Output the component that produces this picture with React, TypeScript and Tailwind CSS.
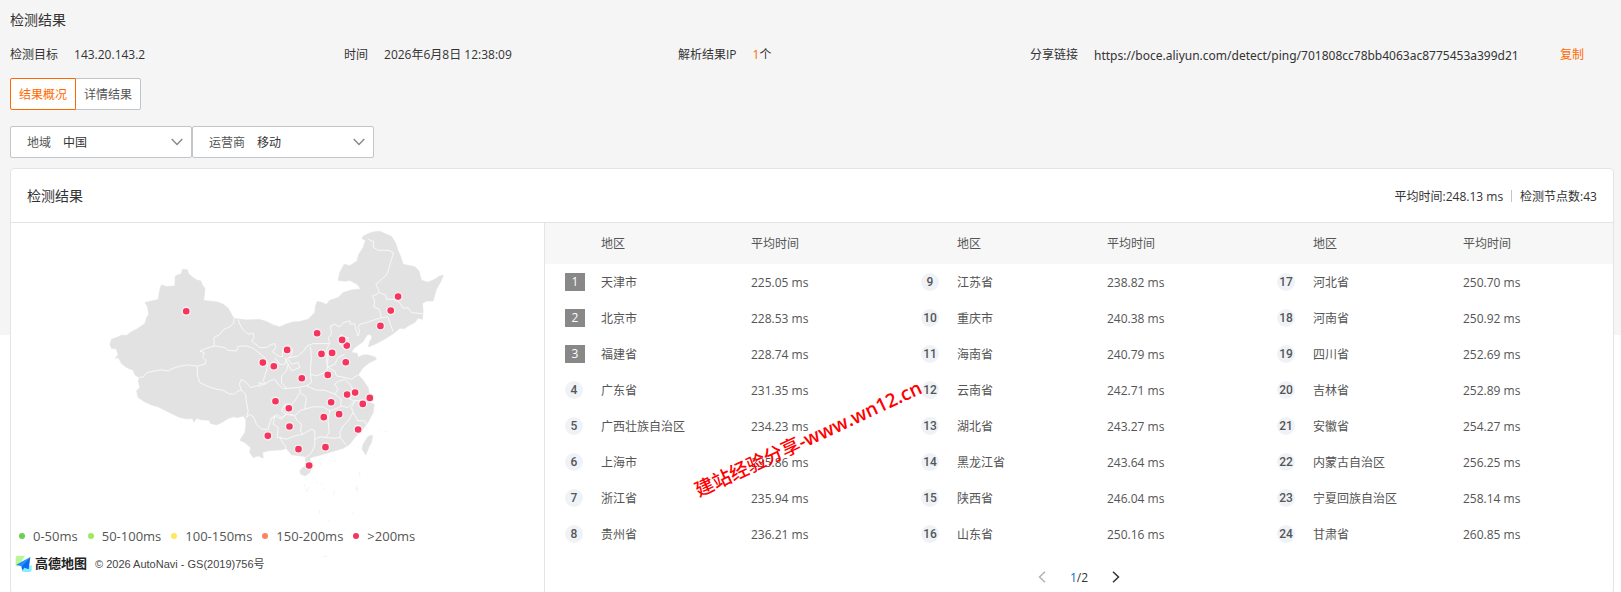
import { useState } from 'react'
import clsx from 'clsx'

interface RegionTime {
  name: string
  time: string
}

const REGIONS: RegionTime[] = [
  { name: '天津市', time: '225.05' },
  { name: '北京市', time: '228.53' },
  { name: '福建省', time: '228.74' },
  { name: '广东省', time: '231.35' },
  { name: '广西壮族自治区', time: '234.23' },
  { name: '上海市', time: '235.86' },
  { name: '浙江省', time: '235.94' },
  { name: '贵州省', time: '236.21' },
  { name: '江苏省', time: '238.82' },
  { name: '重庆市', time: '240.38' },
  { name: '海南省', time: '240.79' },
  { name: '云南省', time: '242.71' },
  { name: '湖北省', time: '243.27' },
  { name: '黑龙江省', time: '243.64' },
  { name: '陕西省', time: '246.04' },
  { name: '山东省', time: '250.16' },
  { name: '河北省', time: '250.70' },
  { name: '河南省', time: '250.92' },
  { name: '四川省', time: '252.69' },
  { name: '吉林省', time: '252.89' },
  { name: '安徽省', time: '254.27' },
  { name: '内蒙古自治区', time: '256.25' },
  { name: '宁夏回族自治区', time: '258.14' },
  { name: '甘肃省', time: '260.85' },
]

const ROWS_PER_COLUMN = 8

const LEGEND = [
  { label: '0-50ms', color: 'bg-[#6bd04f]' },
  { label: '50-100ms', color: 'bg-[#a0e95c]' },
  { label: '100-150ms', color: 'bg-[#ffe75c]' },
  { label: '150-200ms', color: 'bg-[#fa8558]' },
  { label: '>200ms', color: 'bg-[#f7345e]' },
]

// Probe nodes in map units (3 units per pixel at the default panel width)
const NODES = [
  [259, 271], [489, 425], [522, 436], [527, 541], [567, 562], [569, 617],
  [504, 645], [596, 685], [562, 387], [895, 227], [873, 269], [842, 315],
  [652, 337], [741, 374], [727, 357], [665, 399], [697, 396], [738, 424],
  [684, 462], [606, 472], [742, 521], [766, 515], [810, 531], [789, 549],
  [694, 544], [718, 580], [672, 589], [775, 626], [677, 679], [628, 734],
]

const MAINLAND =
  'M30 370 35 355 50 350 65 343 82 343 90 335 110 325 135 308 140 290 147 280 142 255 135 245 155 240 175 236 178 215 184 192 200 197 225 195 226 165 244 158 248 145 262 146 266 158 280 170 290 177 303 180 306 190 315 203 314 220 311 238 325 240 352 243 370 250 385 262 395 280 402 293 440 297 480 296 500 302 520 312 540 318 560 309 580 303 600 302 625 295 645 275 647 255 652 242 665 244 680 251 690 238 715 230 730 215 755 207 783 204 772 190 750 178 735 181 715 178 720 155 733 130 750 134 772 120 777 100 790 80 797 58 787 53 790 46 805 38 820 33 840 31 860 40 875 46 887 65 895 90 902 105 910 130 930 134 945 137 958 150 965 178 985 184 1005 175 1020 165 1031 163 1023 182 1010 205 1000 240 980 240 968 248 970 270 968 295 955 292 945 305 925 315 915 323 900 322 885 335 865 348 845 360 825 370 806 378 810 362 817 350 812 340 802 342 790 362 772 375 760 385 755 395 772 397 775 409 790 402 805 402 825 408 830 415 810 425 790 440 780 455 775 462 788 475 798 490 805 500 808 517 820 532 810 545 823 550 820 575 807 600 795 618 780 635 765 650 750 670 730 682 705 690 680 697 660 703 640 708 630 712 633 725 620 726 616 718 620 708 600 705 575 702 565 690 560 682 545 687 525 688 505 690 488 695 490 712 475 705 460 710 450 695 452 680 435 665 420 658 435 635 438 615 438 595 430 585 415 590 400 588 385 593 365 605 350 612 332 608 328 598 305 597 290 592 282 604 278 593 262 594 240 590 215 578 195 568 175 558 155 552 135 543 115 530 110 510 120 500 115 480 118 470 105 462 100 448 80 440 65 428 55 410 46 413 55 400 48 383 35 383Z'

const ISLANDS = [
  'M817 643 805 647 790 670 787 685 798 702 807 680 815 665 818 648Z',
  'M635 738 630 755 617 765 603 760 600 750 608 741 618 736Z',
]

const WEST_BORDERS = [
  'M118 470 130 468 140 455 165 450 185 447 205 450 220 442 240 436 265 432 292 436',
  'M292 436 315 430 318 418 308 408 313 395 300 390 320 382 343 375 342 350 360 340 372 325 390 318 402 305 402 293',
  'M292 436 293 465 300 485 320 495 350 505 370 508 385 518 402 520 415 510 425 508',
  'M343 375 375 380 385 388 410 390 415 376 440 375 460 382 480 398 495 410 505 425 500 450 495 465 490 480 497 488 480 495',
  'M415 296 420 310 428 325 445 340 460 337 463 350 455 360 480 380 500 380 515 370 525 368 528 380 518 393 535 405 550 408',
  'M548 408 548 385 565 372 578 385 575 405 560 415 555 430 540 430 525 410',
  'M425 508 418 490 425 475 440 485 452 500 470 495 480 495 478 485 495 490 510 480 525 475 535 490 550 503',
  'M425 508 437 520 440 545 445 570 440 590 450 580 462 590 470 610 485 625 505 625 510 605 515 595 530 580 545 590 560 580 580 582',
]

const NORTH_BORDERS = [
  'M265 55 282 62 280 78 295 88 325 88 342 95 335 115 328 140 322 160 300 180 288 190 298 210 292 220 278 225',
  'M298 215 318 222 320 235 340 235 360 245 370 262 385 260 395 275 428 278',
  'M278 225 285 240 282 258 298 265 305 290 280 298 260 305 240 310 235 320 240 330 235 345 228 325 225 308 212 310 210 300 190 305 180 318 165 310 152 315 155 340 145 350 150 368',
  'M305 290 325 288 330 305 340 332',
  'M185 340 190 350 205 350 205 365 195 380 180 370 178 350 185 340',
  'M150 368 140 385 145 410 142 440',
]

const SOUTH_BORDERS = [
  'M195 110 205 130 200 150 185 165 185 185 200 203',
  'M205 115 215 130 235 125 240 140 215 150 205 130',
  'M205 110 215 110 235 105 250 92 262 75 280 68 298 68 328 68',
  'M272 78 275 110 272 140 272 160 275 185 260 195 235 200 190 203',
  'M272 160 290 165 315 155 325 140 320 120 322 95',
  'M322 140 345 130 355 110 375 100',
  'M325 140 345 150 350 165 375 170 395 175 415 162',
  'M360 180 375 175 395 195 400 215 390 235 405 240 425 238 445 240',
  'M260 195 290 208 315 208 345 220 355 205 345 190 360 178',
  'M345 220 365 235 362 255 385 260 395 250 405 240 395 260 400 275 415 300 435 300 440 312',
  'M240 203 242 215 260 230 255 265 280 258 310 258 330 270 362 258',
  'M240 215 225 240 215 250 195 250 185 270 200 280 225 285 240 270 255 265',
  'M225 285 232 300 245 310 242 330 250 340 225 345 200 355 180 350',
  'M150 295 165 285 185 295 200 280',
  'M165 285 160 310 175 320 172 350 180 350 195 375 200 382',
  'M250 340 275 325 285 330 285 375 275 395 262 408',
  'M330 270 325 300 328 335 318 350 345 352 362 350',
  'M285 355 300 348 318 350',
  'M400 275 385 300 370 315 360 335 362 350 378 372',
]

// Reefs and outlying islands of the south
const REEFS =
  'M663 725v8M702 718l8 3M778 752l3 14M612 790l4 8M626 800l-4 12M662 790l6 3M772 800v12M835 635l5-4M855 632h5M614 803l6 7M650 784h5M674 802l-5 4M658 868l2 10M770 795v14M704 810l-3 12M762 874l-5 8M689 898l-4 6M738 920l-7 5M718 930l-5 3M670 1008l12-2'

function ChinaMap() {
  return (
    <svg
      viewBox="-267 6 1600 903"
      role="img"
      aria-label="检测节点分布"
      className="block w-full overflow-visible"
    >
      <g fill="#e2e2e2" stroke="#e2e2e2" strokeWidth="2" strokeLinejoin="round">
        <path d={MAINLAND} />
        {ISLANDS.map((d) => (
          <path key={d} d={d} />
        ))}
      </g>
      <path d={REEFS} fill="none" stroke="#ededed" strokeWidth="2" />
      <g fill="none" stroke="#f8f8f8" strokeWidth="3" strokeLinejoin="round">
        {WEST_BORDERS.map((d) => (
          <path key={d} d={d} />
        ))}
        <g transform="translate(540 0)">
          {NORTH_BORDERS.map((d) => (
            <path key={d} d={d} />
          ))}
        </g>
        <g transform="translate(360 300)">
          {SOUTH_BORDERS.map((d) => (
            <path key={d} d={d} />
          ))}
        </g>
      </g>
      {NODES.map(([x, y]) => (
        <circle key={`${x}-${y}`} cx={x} cy={y} r="12" fill="#f7345e" stroke="#f4f4f4" strokeWidth="4" />
      ))}
    </svg>
  )
}

function AmapLogo() {
  return (
    <svg viewBox="0 0 54 54" className="size-[18px]" aria-hidden="true">
      <path d="M8 2h22L12 34H2V8a6 6 0 0 1 6-6Z" fill="#b9f59a" />
      <path d="M26 38 50 30v14a7 7 0 0 1-7 7H22Z" fill="#8cecff" />
      <path d="M46 6 4 29l15 5Z" fill="#1b8dff" />
      <path d="M46 6 19 34l3 13 6-9 13 5Z" fill="#0a6cf0" />
    </svg>
  )
}

interface FilterSelectProps {
  id: string
  label: string
  options: string[]
}

function FilterSelect({ id, label, options }: FilterSelectProps) {
  return (
    <div className="relative flex h-8 w-[182px] items-center rounded-xs border border-[#c0c6cc] bg-white pt-0.5 pl-4">
      <label htmlFor={id} className="text-[#555]">
        {label}
      </label>
      <select id={id} className="h-full flex-1 appearance-none bg-transparent pl-3 text-[#333] outline-none">
        {options.map((option) => (
          <option key={option}>{option}</option>
        ))}
      </select>
      <svg
        viewBox="0 0 12 8"
        className="pointer-events-none absolute top-[11px] right-2 h-2 w-3"
        fill="none"
        stroke="#888"
        strokeWidth="1.4"
      >
        <path d="m.7 1 5.3 5.4L11.3 1" />
      </svg>
    </div>
  )
}

function RankBadge({ rank }: { rank: number }) {
  return (
    <span
      className={clsx(
        'flex h-[18px] items-center justify-center',
        rank <= 3
          ? 'w-5 bg-[#888] text-white'
          : "w-[18px] rounded-full bg-[#eff3f8] font-['Roboto'] font-medium text-[#555]",
      )}
    >
      {rank}
    </span>
  )
}

function RankTable({ start }: { start: number }) {
  const rows = REGIONS.slice(start, start + ROWS_PER_COLUMN)
  return (
    <table className="w-full table-fixed text-left text-[#555]">
      <thead>
        <tr className="h-[41px] bg-[#f7f7f7]">
          <th className="w-14" />
          <th className="w-[150px] font-normal">地区</th>
          <th className="font-normal">平均时间</th>
        </tr>
      </thead>
      <tbody>
        {rows.map((row, i) => (
          <tr key={row.name} className="h-9">
            <td className="pl-5">
              <RankBadge rank={start + i + 1} />
            </td>
            <td className="pt-0.5">{row.name}</td>
            <td className="pt-0.5">{row.time} ms</td>
          </tr>
        ))}
      </tbody>
    </table>
  )
}

const TABS = ['结果概况', '详情结果']

export default function App() {
  const [tab, setTab] = useState(TABS[0])

  return (
    <main className="bg-[linear-gradient(#f5f5f5,#f5f5f5)] bg-[length:100%_335px] bg-no-repeat pt-2.5 pr-[7px] pl-2.5 font-['Open_Sans','Noto_Sans_CJK_SC',sans-serif] text-xs leading-5 text-[#333]">
      <h1 className="text-sm leading-5">检测结果</h1>

      <div className="mt-[15px] flex h-5">
        <div className="flex w-[334px] gap-4">
          <span>检测目标</span>
          <span>143.20.143.2</span>
        </div>
        <div className="flex w-[334px] gap-4">
          <span>时间</span>
          <span>2026年6月8日 12:38:09</span>
        </div>
        <div className="flex gap-4">
          <span>解析结果IP</span>
          <span>
            <span className="text-[#ff6a00]">1</span>个
          </span>
        </div>
        <div className="ml-auto flex pr-[30px]">
          <label htmlFor="share-link">分享链接</label>
          <input
            id="share-link"
            readOnly
            value="https://boce.aliyun.com/detect/ping/701808cc78bb4063ac8775453a399d21"
            className="mt-1 ml-4 h-[14px] w-[450px] bg-transparent font-['Noto_Sans',sans-serif] leading-[14px] outline-none"
          />
          <button type="button" className="ml-4 text-[#ff6a00]">
            复制
          </button>
        </div>
      </div>

      <div className="mt-[13px] flex">
        {TABS.map((name, i) => (
          <button
            key={name}
            type="button"
            onClick={() => setTab(name)}
            className={clsx(
              'h-8 border bg-white px-2 pt-0.5',
              i === 0 ? 'rounded-l-xs' : '-ml-px rounded-r-xs',
              tab === name ? 'relative border-[#ff6a00] text-[#ff6a00]' : 'border-[#c0c6cc] text-[#555]',
            )}
          >
            {name}
          </button>
        ))}
      </div>

      <div className="mt-4 flex">
        <FilterSelect id="area" label="地域" options={['中国', '海外']} />
        <FilterSelect id="isp" label="运营商" options={['移动', '联通', '电信']} />
      </div>

      <section className="relative mt-2.5 rounded border border-[#e3e4e6] bg-white">
        <header className="flex h-[54px] items-center border-b border-[#e3e4e6] px-4">
          <h2 className="text-sm">检测结果</h2>
          <p className="ml-auto pt-0.5">平均时间:248.13 ms</p>
          <span className="mx-2 h-3 w-px bg-[#c0c6cc]" />
          <p className="pt-0.5">检测节点数:43</p>
        </header>

        <div className="flex">
          <div className="w-1/3 border-r border-[#e3e4e6]">
            <ChinaMap />
            <ul className="mt-0.5 flex gap-2.5 pl-2 text-[13px] leading-5 text-[#555]">
              {LEGEND.map((item) => (
                <li key={item.label} className="flex items-center gap-2">
                  <span className={clsx('size-1.5 rounded-full', item.color)} />
                  {item.label}
                </li>
              ))}
            </ul>
            <div className="mt-2 flex items-center pl-1 font-['Liberation_Sans','Noto_Sans_CJK_SC',sans-serif]">
              <AmapLogo />
              <span className="ml-0.5 text-[13px] leading-5 font-bold text-[#222]">高德地图</span>
              <span className="ml-2 text-[11px] text-[#444]">© 2026 AutoNavi - GS(2019)756号</span>
            </div>
          </div>

          <div className="w-2/3">
            <div className="grid grid-cols-3">
              <RankTable start={0} />
              <RankTable start={8} />
              <RankTable start={16} />
            </div>
            <nav className="mt-[13px] mb-1 flex h-6 items-center justify-center gap-6">
              <button type="button" disabled aria-label="上一页">
                <svg viewBox="0 0 8 12" className="h-3 w-2" fill="none" stroke="#b3b3b3" strokeWidth="1.5">
                  <path d="M7 .7 1.5 6 7 11.3" />
                </svg>
              </button>
              <span className="pt-0.5">
                <span className="text-[#0070cc]">1</span>/2
              </span>
              <button type="button" aria-label="下一页">
                <svg viewBox="0 0 8 12" className="h-3 w-2" fill="none" stroke="#333" strokeWidth="1.5">
                  <path d="M1 .7 6.5 6 1 11.3" />
                </svg>
              </button>
            </nav>
          </div>
        </div>

        <p className="pointer-events-none absolute top-[311px] left-[689px] origin-bottom-left -rotate-25 text-[19px] leading-5 font-semibold whitespace-nowrap text-[#ff0000]">
          <span className="font-medium">建站经验分享</span>-www.wn12.cn
        </p>
      </section>
    </main>
  )
}
